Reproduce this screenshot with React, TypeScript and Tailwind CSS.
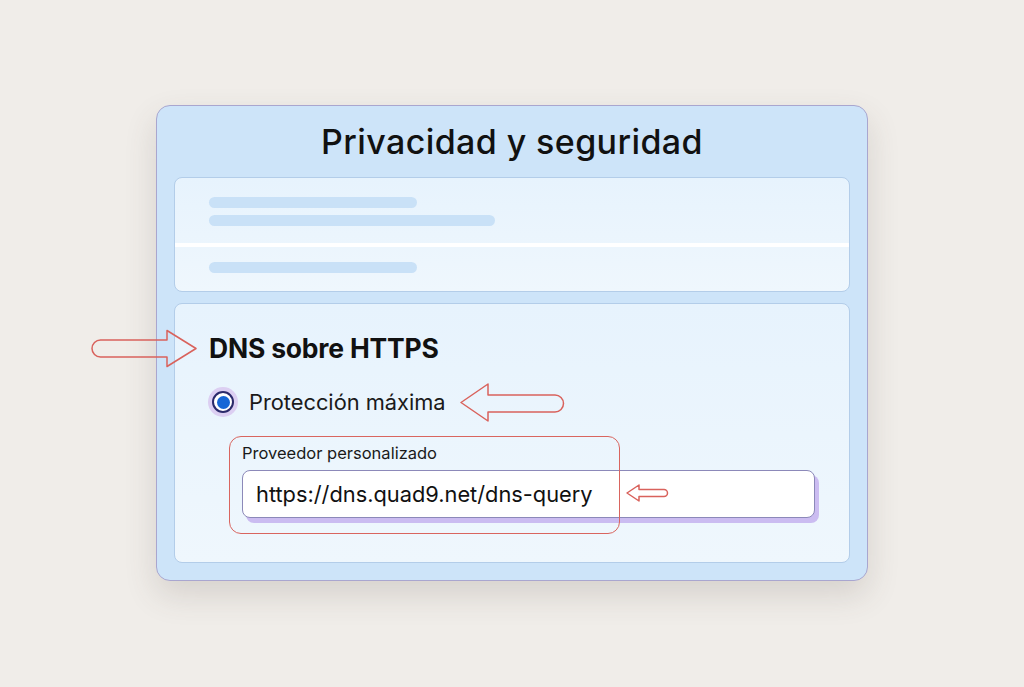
import type { ReactNode } from "react"

function Bar({ w }: { w: string }) {
  return <div className={`h-[11px] rounded-full bg-[#c9e1f7] ${w}`} />
}

function Panel({ children, className = "" }: { children: ReactNode; className?: string }) {
  return (
    <div className={`rounded-[8px] border border-[#b3cde9] bg-gradient-to-b from-[#e7f3fd] to-[#eff7fd] ${className}`}>
      {children}
    </div>
  )
}

export default function App() {
  return (
    <main
      className="flex min-h-[687px] w-full justify-center bg-[#f0ede9] pt-[105px]"
      style={{ fontFamily: "Inter, 'Noto Sans', sans-serif" }}
    >
      <div className="relative h-[476px] w-[712px]">
        {/* Tarjeta */}
        <div className="flex h-full flex-col rounded-[14px] border border-[#a9a6cf] bg-[#cde4f9] px-[17px] pb-[17px] shadow-[0_14px_32px_rgba(80,70,60,0.16)]">
          <div className="flex h-[71px] items-center justify-center">
            <h1 className="text-[34px] font-medium tracking-[0.4px] text-[#111]">Privacidad y seguridad</h1>
          </div>

          <Panel className="h-[115px]">
            <div className="flex flex-col gap-[7px] px-[34px] pt-[19px]">
              <Bar w="w-[208px]" />
              <Bar w="w-[286px]" />
            </div>
            <div className="mt-[17px] h-[4px] bg-white" />
            <div className="px-[34px] pt-[15px]">
              <Bar w="w-[208px]" />
            </div>
          </Panel>

          <Panel className="mt-[11px] flex-1 px-[34px] pt-[29px]">
            <h2 className="text-[26.5px] font-bold leading-[30px] tracking-[-0.2px] text-[#111]">DNS sobre HTTPS</h2>
            <div className="mt-[24px] flex items-center gap-[11px] -ml-px">
              <div className="flex h-[30px] w-[30px] items-center justify-center rounded-full bg-[#dccff2]">
                <div className="flex h-[22px] w-[22px] items-center justify-center rounded-full border-2 border-[#2b2a6b] bg-white">
                  <div className="h-[13px] w-[13px] rounded-full bg-[#1666d6]" />
                </div>
              </div>
              <span className="text-[21.8px] leading-[30px] text-[#1a1a1a]">Protección máxima</span>
            </div>
            <div className="ml-[33px] mt-[26px] flex flex-col">
              <label className="text-[16.5px] leading-[20px] text-[#1a1a1a]">Proveedor personalizado</label>
              <div className="mt-[7px] flex h-[48px] items-center rounded-[8px] border border-[#8c89b9] bg-white px-[13px] shadow-[4px_5px_0_#cbbcf1]">
                <span className="text-[21.8px] text-[#111]">https://dns.quad9.net/dns-query</span>
              </div>
            </div>
          </Panel>
        </div>

        {/* Anotaciones */}
        <div className="pointer-events-none absolute left-[73px] top-[331px] h-[98px] w-[391px] rounded-[12px] border-[1.5px] border-[#d9655f]" />

        <svg className="absolute left-[-65px] top-[224px]" width="108" height="40" viewBox="0 0 108 40" fill="none">
          <path
            d="M9.5 11 H76 V1.5 L105 19.5 L76 37.5 V28 H9.5 A8.5 8.5 0 0 1 9.5 11 Z"
            stroke="#d9625c"
            strokeWidth="1.5"
            strokeLinejoin="round"
          />
        </svg>

        <svg className="absolute left-[303px] top-[277px]" width="108" height="42" viewBox="0 0 108 42" fill="none">
          <path
            d="M2 20.5 L29 2 V13 H96 A8.5 8.5 0 0 1 96 30 H29 V39 Z"
            stroke="#d9625c"
            strokeWidth="1.5"
            strokeLinejoin="round"
          />
        </svg>

        <svg className="absolute left-[469px] top-[378px]" width="46" height="20" viewBox="0 0 46 20" fill="none">
          <path
            d="M2 10 L14 2 V6.5 H39 A3.5 3.5 0 0 1 39 13.5 H14 V18 Z"
            stroke="#d9625c"
            strokeWidth="1.5"
            strokeLinejoin="round"
          />
        </svg>
      </div>
    </main>
  )
}
